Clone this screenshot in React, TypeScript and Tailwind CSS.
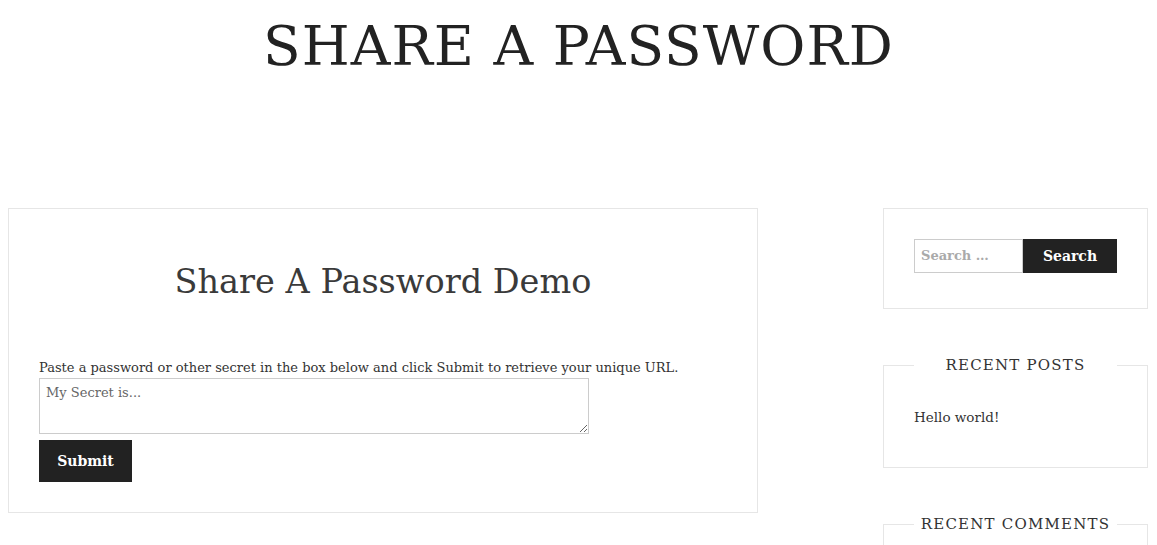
import React from "react";

const serif = "font-['DejaVu_Serif','Liberation_Serif',serif]";

function Widget({ title, children }: { title: string; children?: React.ReactNode }) {
  return (
    <fieldset className="min-w-0 border border-[#e6e6e6] px-[30px] pt-[32px] pb-[40px]">
      <legend className="w-full text-center whitespace-nowrap text-[15px] leading-[20px] tracking-[1.2px] text-[#333] uppercase">
        {title}
      </legend>
      {children}
    </fieldset>
  );
}

export default function App() {
  return (
    <div className={`${serif} bg-white h-[545px] w-[1157px] overflow-hidden text-[#333]`}>
      <header className="h-[208px] pt-[14px] text-center">
        <h1 className="text-[55px] leading-[64px] tracking-[1px] text-[#222]">SHARE A PASSWORD</h1>
      </header>

      <div className="flex items-start pl-[8px] gap-[125px]">
        <main className="w-[750px] shrink-0 border border-[#e6e6e6] px-[30px] pt-[50px] pb-[30px]">
          <h2 className="text-center text-[33.5px] leading-[46px] text-[#3a3a3a]">Share A Password Demo</h2>
          <form className="mt-[53px] flex flex-col items-start">
            <p className="text-[13px] leading-[20px]">
              Paste a password or other secret in the box below and click Submit to retrieve your unique URL.
            </p>
            <textarea
              placeholder="My Secret is..."
              className="w-[550px] h-[56px] border border-[#ccc] px-[6px] py-[4px] text-[13px] text-[#555] placeholder:text-[#666] outline-none"
            />
            <button type="button" className="mt-[6px] h-[42px] w-[93px] bg-[#222] text-white font-bold text-[14px]">
              Submit
            </button>
          </form>
        </main>

        <aside className="w-[265px] shrink-0 flex flex-col gap-[46px]">
          <div className="border border-[#e6e6e6] pl-[30px] pt-[30px] pb-[35px]">
            <div className="flex h-[34px]">
              <input
                placeholder="Search …"
                className="w-[109px] border border-[#ccc] px-[6px] text-[13px] font-bold text-[#555] placeholder:text-[#aaa] outline-none"
              />
              <button type="button" className="w-[94px] bg-[#222] text-white font-bold text-[14px]">
                Search
              </button>
            </div>
          </div>

          <Widget title="Recent Posts">
            <a className="block text-[13.5px] leading-[20px] text-[#333]">Hello world!</a>
          </Widget>

          <Widget title="Recent Comments" />
        </aside>
      </div>
    </div>
  );
}
